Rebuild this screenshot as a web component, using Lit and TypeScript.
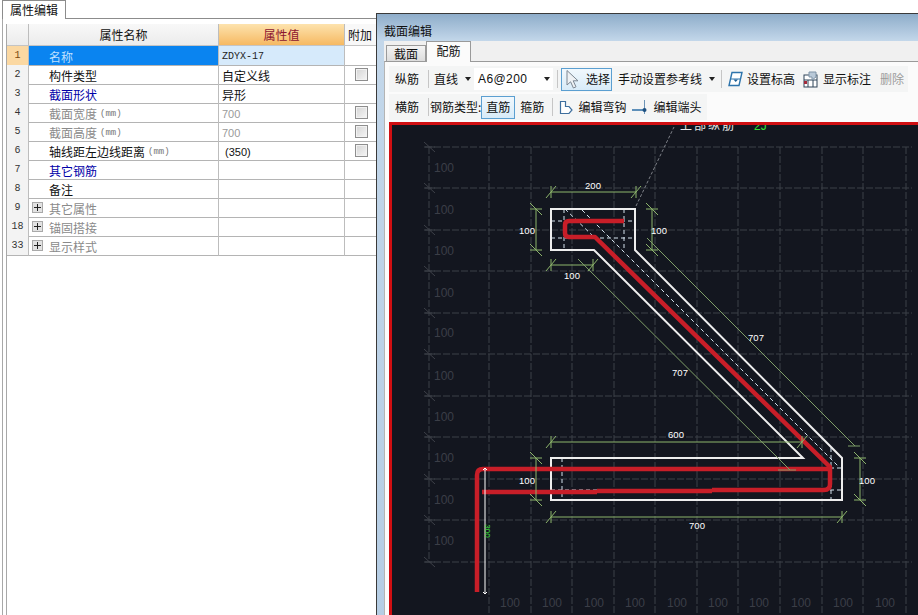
import { LitElement, html, css, svg } from "lit";
import { customElement } from "lit/decorators.js";
import { classMap } from "lit/directives/class-map.js";

const CJK = css`"Noto Sans CJK SC", "Liberation Sans", sans-serif`;

interface Row
{
    no: string;
    name: string;
    unit?: boolean;
    value?: string;
    valueKind?: "mono" | "muted" | "calc";
    tone?: "link" | "muted";
    check?: boolean;
    expand?: boolean;
    active?: boolean;
}

const ROWS: Row[] = [
    { no: "1", name: "名称", value: "ZDYX-17", valueKind: "mono", active: true },
    { no: "2", name: "构件类型", value: "自定义线", check: true },
    { no: "3", name: "截面形状", value: "异形", tone: "link" },
    { no: "4", name: "截面宽度", unit: true, value: "700", valueKind: "muted", tone: "muted", check: true },
    { no: "5", name: "截面高度", unit: true, value: "700", valueKind: "muted", tone: "muted", check: true },
    { no: "6", name: "轴线距左边线距离", unit: true, value: "(350)", valueKind: "calc", check: true },
    { no: "7", name: "其它钢筋", tone: "link" },
    { no: "8", name: "备注" },
    { no: "9", name: "其它属性", tone: "muted", expand: true },
    { no: "18", name: "锚固搭接", tone: "muted", expand: true },
    { no: "33", name: "显示样式", tone: "muted", expand: true },
];

@customElement("property-panel")
export class PropertyPanel extends LitElement
{
    static styles = css`
        :host {
            display: flex;
            flex-direction: column;
            height: 615px;
            font: 12px ${CJK};
            color: #111;
        }
        .tabs {
            display: flex;
            height: 18px;
            padding-left: 2px;
        }
        .tab {
            width: 55px;
            height: 18px;
            padding-left: 7px;
            line-height: 17px;
            background: #fff;
            border: 1px solid #8c8c8c;
            border-bottom: none;
            position: relative;
            z-index: 1;
        }
        .body {
            flex: 1;
            margin-left: 2px;
            padding: 5px 0 0 3px;
            border-top: 1px solid #8c8c8c;
            border-left: 1px solid #a8a8a8;
        }
        .grid {
            height: 100%;
            border-left: 1px solid #a8a8a8;
        }
        .row {
            display: grid;
            grid-template-columns: 22px 190px 126px 40px;
            height: 19px;
        }
        .row > div {
            box-sizing: border-box;
            display: flex;
            align-items: center;
            border-right: 1px solid #bdbdbd;
            border-bottom: 1px solid #b4b4b4;
            white-space: nowrap;
        }
        .row.head {
            height: 22px;
        }
        .head > div {
            justify-content: center;
            background: linear-gradient(#f8f8f8, #ececec);
            border-bottom-color: #c4c4c4;
        }
        .head > .value-head {
            color: #8c1530;
            background: linear-gradient(#fde3ae, #f6b962);
        }
        .head > .extra-head {
            justify-content: flex-start;
            padding-left: 3px;
            background: #f8f8f8;
        }
        .no {
            justify-content: center;
            background: #f3f3f3;
            font: 10px "Liberation Mono", monospace;
            color: #333;
        }
        .active .no {
            background: #fbd8a2;
            color: #7a4a10;
        }
        .row > .name {
            padding: 2px 0 0 20px;
        }
        .expand > .name {
            padding-left: 3px;
        }
        .link .name {
            color: #0000a8;
        }
        .muted .name {
            color: #8a8a8a;
        }
        .active .name {
            background: #0a84f0;
            color: #bfe0ff;
        }
        .unit {
            margin-left: 3px;
            font: 9px "Liberation Mono", monospace;
            color: #777;
        }
        .row > .val {
            padding: 2px 0 0 3px;
        }
        .active .val {
            background: #d6eafb;
        }
        .val.mono {
            font: 10px "Liberation Mono", monospace;
            color: #222;
        }
        .val.muted {
            font: 11px "Liberation Sans", sans-serif;
            color: #9a9a9a;
        }
        .row > .val.calc {
            padding-left: 6px;
            font: 11px "Liberation Sans", sans-serif;
        }
        .extra {
            padding-left: 10px;
        }
        .check {
            box-sizing: border-box;
            width: 13px;
            height: 13px;
            border: 1px solid #8e8e8e;
            background: linear-gradient(135deg, #d4d4d4, #f6f6f6);
            box-shadow: inset 0 0 0 1px #f2f2f2;
        }
        .plus {
            box-sizing: border-box;
            position: relative;
            width: 11px;
            height: 11px;
            margin: -2px 6px 0 0;
            border: 1px solid #a9a9a9;
            background: #e2e2e2;
        }
        .plus::before,
        .plus::after {
            content: "";
            position: absolute;
            background: #222;
        }
        .plus::before {
            left: 1px;
            right: 1px;
            top: 4px;
            height: 1px;
        }
        .plus::after {
            top: 1px;
            bottom: 1px;
            left: 4px;
            width: 1px;
        }
    `;

    render()
    {
        return html`
            <div class="tabs"><div class="tab">属性编辑</div></div>
            <div class="body">
                <div class="grid">
                    <div class="row head">
                        <div></div>
                        <div>属性名称</div>
                        <div class="value-head">属性值</div>
                        <div class="extra-head">附加</div>
                    </div>
                    ${ROWS.map(r => this.renderRow(r))}
                </div>
            </div>
        `;
    }

    renderRow(r: Row)
    {
        const rowClass = {
            row: true,
            active: !!r.active,
            expand: !!r.expand,
            link: r.tone === "link",
            muted: r.tone === "muted",
        };
        return html`
            <div class=${classMap(rowClass)}>
                <div class="no">${r.no}</div>
                <div class="name">
                    ${r.expand ? html`<span class="plus"></span>` : ""}
                    ${r.name}
                    ${r.unit ? html`<span class="unit">(mm)</span>` : ""}
                </div>
                <div class="val ${r.valueKind ?? ""}">${r.value ?? ""}</div>
                <div class="extra">${r.check ? html`<span class="check"></span>` : ""}</div>
            </div>
        `;
    }
}

const GRID_X = [429, 489, 531, 572, 614, 655, 697, 738, 780, 822, 863, 906];
const GRID_Y = [147, 188, 230, 271, 313, 354, 396, 437, 479, 520, 562];
const SIDE_LABEL_Y = [172, 214, 255, 297, 337, 380, 421, 462, 504, 545];
const BOTTOM_LABEL_X = [510, 552, 594, 635, 677, 718, 759, 801, 843, 885];

@customElement("section-canvas")
export class SectionCanvas extends LitElement
{
    static styles = css`
        :host {
            display: block;
            flex: 1;
            min-height: 0;
            background: #13161f;
            border-top: 3px solid #d00f12;
            border-left: 3px solid #d00f12;
        }
        svg {
            display: block;
        }
        .grid-line {
            stroke: #3d4048;
            stroke-dasharray: 7 2;
            fill: none;
        }
        .grid-label {
            fill: #3b3e47;
            font: 12px "Liberation Sans", sans-serif;
            text-anchor: middle;
        }
        .tick {
            stroke: #3d4048;
            fill: none;
        }
        .outline {
            stroke: #eeeeee;
            stroke-width: 2;
            fill: none;
        }
        .inset {
            stroke: #d5e2ee;
            stroke-dasharray: 4 3;
            fill: none;
        }
        .rebar {
            stroke: #c81e28;
            stroke-width: 4.5;
            fill: none;
            stroke-linejoin: round;
        }
        .dim {
            stroke: #8db56c;
            fill: none;
        }
        .dim-thin {
            stroke: #7f9f68;
            fill: none;
        }
        .dim-label {
            fill: #fff;
            font: 9.5px "Liberation Sans", sans-serif;
            text-anchor: middle;
        }
        .leader {
            stroke: #7d8087;
            stroke-dasharray: 3 2;
            fill: none;
        }
        .span-line {
            stroke: #fff;
            fill: none;
        }
        .span-label {
            fill: #35e035;
            font: 8px "Liberation Sans", sans-serif;
            text-anchor: middle;
        }
        .note {
            fill: #e8e8e8;
            font: 12px ${CJK};
            letter-spacing: 2px;
        }
        .note-green {
            fill: #35e035;
            font: 12px "Liberation Sans", sans-serif;
        }
    `;

    hDim(x1: number, x2: number, y: number)
    {
        const mark = (x: number) => svg`<path class="dim" d="M${x - 5} ${y + 6}L${x + 5} ${y - 6}M${x} ${y - 6}V${y + 6}"/>`;
        return svg`<path class="dim" d="M${x1} ${y}H${x2}"/>${mark(x1)}${mark(x2)}`;
    }

    vDim(x: number, y1: number, y2: number)
    {
        const mark = (y: number) => svg`<path class="dim" d="M${x - 6} ${y - 6}L${x + 6} ${y + 6}M${x - 6} ${y}H${x + 6}"/>`;
        return svg`<path class="dim" d="M${x} ${y1}V${y2}"/>${mark(y1)}${mark(y2)}`;
    }

    render()
    {
        return html`
            <svg width="526" height="490" viewBox="392 125 526 490">
                ${GRID_Y.map(y => svg`
                    <path class="grid-line" d="M425 ${y}H912"/>
                    <path class="tick" d="M424 ${y - 5}L435 ${y + 5}M424 ${y}H435"/>
                `)}
                ${GRID_X.map((x, i) => svg`
                    <path class="grid-line" d="M${x} 147V${i === 0 ? 562 : 615}"/>
                `)}
                ${SIDE_LABEL_Y.map(y => svg`<text class="grid-label" x="444" y=${y}>100</text>`)}
                ${BOTTOM_LABEL_X.map(x => svg`<text class="grid-label" x=${x} y="607">100</text>`)}

                <path class="leader" d="M636 206L674 127"/>
                <text class="note" x="680" y="130">上部纵筋</text>
                <text class="note-green" x="754" y="130">2J</text>

                <path class="inset" d="M551 221H635M551 238H635M564 209V250M624 209V250M565 209L595 238"/>
                <path class="inset" d="M582 210L838 466"/>
                <path class="inset" d="M551 490H597M562 458V500M831 448V500M830 468H842M830 490H842"/>

                <path class="outline" d="M551 209H635V250L842 458V500H551V458H803L594 250H551Z"/>

                <path class="rebar" d="M624 221H569Q565 221 565 225V233Q565 237 569 237H595L830 467V484Q830 490 824 490H712"/>
                <path class="rebar" d="M712 491H597"/>
                <path class="rebar" d="M597 492H482"/>
                <path class="rebar" d="M477 592V475Q477 469 483 469H830"/>

                ${this.hDim(551, 636, 192)}
                ${this.vDim(536, 209, 250)}
                ${this.vDim(652, 209, 250)}
                ${this.hDim(551, 593, 265)}
                ${this.hDim(551, 802, 442)}
                ${this.hDim(551, 842, 517)}
                ${this.vDim(536, 458, 500)}
                ${this.vDim(860, 458, 500)}

                <path class="dim-thin" d="M578 259L790 470M778 470H796"/>
                <path class="dim-thin" d="M647 238L855 446M848 446H860"/>

                <text class="dim-label" x="593" y="189">200</text>
                <text class="dim-label" x="527" y="234">100</text>
                <text class="dim-label" x="659" y="234">100</text>
                <text class="dim-label" x="572" y="279">100</text>
                <text class="dim-label" x="680" y="376">707</text>
                <text class="dim-label" x="756" y="341">707</text>
                <text class="dim-label" x="676" y="438">600</text>
                <text class="dim-label" x="697" y="529">700</text>
                <text class="dim-label" x="527" y="484">100</text>
                <text class="dim-label" x="867" y="484">100</text>

                <path class="span-line" d="M485 468V594M483 470L485 468L487 470M483 592L485 594L487 592"/>
                <text class="span-label" transform="translate(484.5 531) rotate(90)" x="0" y="0">300</text>
            </svg>
        `;
    }
}

@customElement("section-dialog")
export class SectionDialog extends LitElement
{
    static styles = css`
        :host {
            box-sizing: border-box;
            position: absolute;
            left: 376px;
            top: 13px;
            width: 560px;
            height: 620px;
            display: flex;
            flex-direction: column;
            padding-left: 7px;
            border: 1px solid #3a3a3a;
            background: linear-gradient(#8eadca 0, #c3d7ea 27px, #b5cde4 100%);
            font: 12px ${CJK};
            color: #111;
        }
        .title {
            height: 27px;
            line-height: 34px;
            color: #111;
        }
        .client {
            flex: 1;
            display: flex;
            flex-direction: column;
            min-height: 0;
            background: #f0f0f0;
        }
        .tabs {
            display: flex;
            align-items: flex-end;
            height: 20px;
            padding-left: 2px;
        }
        .tab {
            box-sizing: border-box;
            width: 40px;
            height: 16px;
            line-height: 16px;
            text-align: center;
            background: linear-gradient(#f4f4f4, #dcdcdc);
            border: 1px solid #9a9a9a;
            border-bottom: none;
        }
        .tab.on {
            width: 45px;
            height: 21px;
            margin-bottom: -1px;
            line-height: 18px;
            background: #fbfbfb;
            position: relative;
            z-index: 1;
        }
        .content {
            flex: 1;
            min-height: 0;
            display: flex;
            flex-direction: column;
            padding: 4px 0 0 4px;
            border-top: 1px solid #9a9a9a;
            border-left: 1px solid #b4b4b4;
            background: #fbfbfb;
        }
        .bar {
            display: flex;
            align-items: center;
            width: fit-content;
            height: 26px;
            padding: 0 4px 0 6px;
            background: #f4f5f5;
            white-space: nowrap;
        }
        .bar.second {
            margin-top: 2px;
            margin-bottom: 2px;
            padding-right: 6px;
        }
        .bar > span:not(.sep):not(.caret):not(.btn):not(.combo) {
            padding-bottom: 2px;
        }
        .sep {
            width: 1px;
            height: 18px;
            margin: 0 5px 0 9px;
            background: #c6c6c6;
        }
        .sep.type {
            margin-right: 1px;
        }
        .sep.combo-end {
            margin: 0 3px 0 4px;
        }
        .sep.levels {
            margin: 0 6px;
        }
        .sep.hooks {
            margin: 0 6px 0 8px;
        }
        .caret {
            width: 0;
            height: 0;
            margin-left: 7px;
            border-left: 3.5px solid transparent;
            border-right: 3.5px solid transparent;
            border-top: 4px solid #222;
        }
        .combo {
            box-sizing: border-box;
            display: flex;
            align-items: center;
            justify-content: space-between;
            width: 79px;
            height: 22px;
            margin-left: 3px;
            padding: 0 3px 0 4px;
            background: #fff;
            font: 12px "Liberation Sans", sans-serif;
            letter-spacing: 0.4px;
        }
        .combo .caret {
            margin-left: 0;
        }
        .btn {
            box-sizing: border-box;
            display: flex;
            align-items: center;
            height: 23px;
            padding-bottom: 1px;
            border: 1px solid #5b9fd1;
            background: linear-gradient(#f1f8fd, #d8ebf8);
        }
        .btn.select {
            width: 51px;
            padding-left: 3px;
            gap: 5px;
        }
        .btn.straight {
            width: 34px;
            justify-content: center;
        }
        .i-manual {
            margin-left: 6px;
        }
        .t-level {
            margin-left: 4px;
        }
        .i-mark {
            margin-left: 8px;
        }
        .t-mark {
            margin-left: 5px;
        }
        .t-delete {
            margin-left: 9px;
            color: #9c9c9c;
        }
        .t-stirrup {
            margin-left: 5px;
        }
        .t-hook {
            margin-left: 5px;
        }
        .i-end {
            margin-left: 6px;
        }
        .t-end {
            margin-left: 4px;
        }
        .ico {
            display: block;
            flex: none;
        }
    `;

    render()
    {
        return html`
            <div class="title">截面编辑</div>
            <div class="client">
                <div class="tabs">
                    <div class="tab">截面</div>
                    <div class="tab on">配筋</div>
                </div>
                <div class="content">
                    <div class="bar">
                        <span>纵筋</span>
                        <span class="sep"></span>
                        <span>直线</span>
                        <span class="caret"></span>
                        <span class="combo">A6@200<span class="caret"></span></span>
                        <span class="sep combo-end"></span>
                        <span class="btn select">
                            <svg class="ico" width="16" height="20" viewBox="0 0 16 20">
                                <path d="M2 1.5V16l3.6-3.2L8.4 19l2.6-1.2-2.8-6H13Z" fill="#eef1f4" stroke="#7c8792"/>
                            </svg>
                            选择
                        </span>
                        <span class="i-manual">手动设置参考线</span>
                        <span class="caret"></span>
                        <span class="sep levels"></span>
                        <svg class="ico" width="15" height="16" viewBox="0 0 15 16">
                            <path d="M4 1.5H14L11 14.5H1Z" fill="#fff" stroke="#2d74ac" stroke-width="1.4"/>
                            <path d="M3 8H12" stroke="#2d74ac"/>
                            <path d="M5.5 8.5H10L7.7 11Z" fill="#1d5f96"/>
                        </svg>
                        <span class="t-level">设置标高</span>
                        <svg class="ico i-mark" width="15" height="17" viewBox="0 0 15 17">
                            <rect x="1" y="4" width="13" height="12" fill="#fff" stroke="#2e4458"/>
                            <path d="M1 9H14M5 9V16M10 9V16" stroke="#2e4458"/>
                            <path d="M6 1H13V6L9 9V6H6Z" fill="#b9c9d8" stroke="#7f93a6"/>
                            <rect x="1" y="10" width="3" height="3" fill="#a32a3a"/>
                        </svg>
                        <span class="t-mark">显示标注</span>
                        <span class="t-delete">删除</span>
                    </div>
                    <div class="bar second">
                        <span>横筋</span>
                        <span class="sep type"></span>
                        <span>钢筋类型:</span>
                        <span class="btn straight">直筋</span>
                        <span class="t-stirrup">箍筋</span>
                        <span class="sep hooks"></span>
                        <svg class="ico" width="14" height="15" viewBox="0 0 14 15">
                            <path d="M1.5 1.5H6.5V6.5H10L13 10L10 13.5H1.5Z" fill="#fff" stroke="#3f6f9e" stroke-width="1.2"/>
                        </svg>
                        <span class="t-hook">编辑弯钩</span>
                        <svg class="ico i-end" width="17" height="16" viewBox="0 0 17 16">
                            <path d="M0 11H12" stroke="#2d6ea6" stroke-width="1.5"/>
                            <path d="M12.5 1V15" stroke="#6c93b6"/>
                            <circle cx="12.5" cy="11" r="2" fill="#1d4f80"/>
                        </svg>
                        <span class="t-end">编辑端头</span>
                    </div>
                    <section-canvas></section-canvas>
                </div>
            </div>
        `;
    }
}

@customElement("app-root")
export class AppRoot extends LitElement
{
    static styles = css`
        :host {
            display: block;
            position: relative;
            width: 918px;
            height: 615px;
            overflow: hidden;
            background: #fff;
        }
    `;

    render()
    {
        return html`
            <property-panel></property-panel>
            <section-dialog></section-dialog>
        `;
    }
}
